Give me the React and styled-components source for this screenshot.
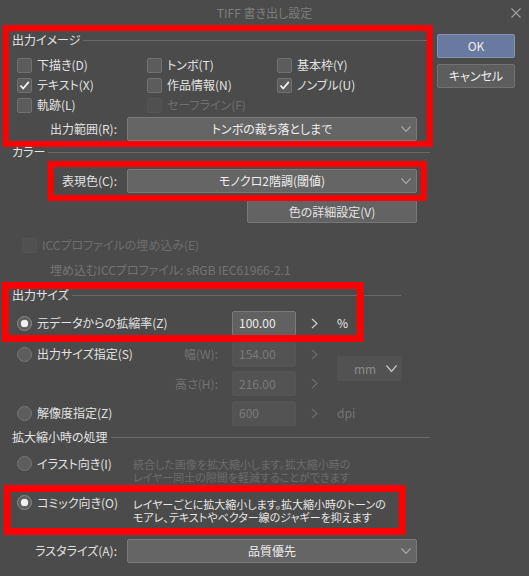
import React from "react";
import styled, { createGlobalStyle } from "styled-components";

const GlobalStyle = createGlobalStyle`
  body {
    margin: 0;
    background: #4b4b4b;
  }
`;

const Dialog = styled.div`
  position: relative;
  width: 529px;
  height: 576px;
  overflow: hidden;
  background: #4b4b4b;
  color: #e2e2e2;
  font-family: "Noto Sans CJK JP", "Noto Sans", sans-serif;
  font-size: 12px;
  line-height: 1;
  font-feature-settings: "palt";
`;

const TitleBar = styled.div`
  height: 25px;
  display: grid;
  grid-template-columns: 1fr auto 1fr;
  align-items: center;
  color: #7e7e7e;
`;

const CloseButton = styled.div`
  grid-column: 3;
  justify-self: end;
  padding-right: 8px;
  display: flex;
`;

const Body = styled.div`
  display: flex;
`;

const LeftColumn = styled.div`
  width: 432px;
  display: flex;
  flex-direction: column;
`;

const RightColumn = styled.div`
  margin-left: 5px;
  width: 78px;
  padding-top: 9px;
  display: flex;
  flex-direction: column;
  gap: 6px;
`;

const DialogButton = styled.div`
  height: 24px;
  box-sizing: border-box;
  display: flex;
  align-items: center;
  justify-content: center;
  border-radius: 2px;
  background: ${(p) => (p.primary ? "#6a79a0" : "#5d5d5d")};
  border: 1px solid ${(p) => (p.primary ? "#8592b3" : "#737373")};
  color: #eeeeee;
`;

const SectionHeader = styled.div`
  height: ${(p) => p.h}px;
  width: ${(p) => p.end}px;
  padding-left: 12px;
  box-sizing: border-box;
  display: flex;
  align-items: center;
  color: #e4e4e4;
`;

const HeaderLine = styled.div`
  flex: 1;
  height: 1px;
  margin-left: 3px;
  margin-top: 1px;
  background: #686868;
`;

const CheckGrid = styled.div`
  display: grid;
  grid-template-columns: 130px 130px 1fr;
  grid-auto-rows: 20px;
  padding-left: 17px;
`;

const CheckItem = styled.div`
  display: flex;
  align-items: center;
  gap: 5px;
  padding-left: ${(p) => p.indent || 0}px;
  color: ${(p) => (p.disabled ? "#6e6e6e" : "#e2e2e2")};
`;

const Box = styled.div`
  width: 15px;
  height: 15px;
  box-sizing: border-box;
  border-radius: 2px;
  display: flex;
  align-items: center;
  justify-content: center;
  background: ${(p) => (p.disabled ? "#505050" : "#5c5c5c")};
  border: 1px solid ${(p) => (p.disabled ? "#545454" : "#717171")};
`;

const Row = styled.div`
  height: ${(p) => p.h}px;
  display: flex;
  align-items: center;
  padding-left: ${(p) => p.indent || 0}px;
  margin-top: ${(p) => p.mt || 0}px;
  color: ${(p) => p.color || "#e2e2e2"};
`;

const FieldLabel = styled.div`
  width: 117px;
  text-align: right;
`;

const Select = styled.div`
  margin-left: 10px;
  width: 290px;
  height: 24px;
  box-sizing: border-box;
  display: grid;
  grid-template-columns: 20px 1fr 20px;
  align-items: center;
  background: #656565;
  border: 1px solid #7a7a7a;
  border-radius: 2px;
  color: #ededed;
`;

const SelectText = styled.div`
  grid-column: 2;
  text-align: center;
`;

const ChevronCell = styled.div`
  display: flex;
  justify-content: center;
`;

const WideButton = styled.div`
  margin-left: 247px;
  width: 170px;
  height: 23px;
  box-sizing: border-box;
  display: flex;
  align-items: center;
  justify-content: center;
  background: #636363;
  border: 1px solid #787878;
  border-radius: 2px;
`;

const SizeGrid = styled.div`
  display: grid;
  padding-left: 17px;
  grid-template-columns: 215px 64px 41px 65px;
  grid-template-rows: 32px 30px 29px 30px;
  align-items: center;
`;

const SizeCell = styled.div`
  display: flex;
  align-items: center;
  justify-content: ${(p) => (p.end ? "flex-end" : "space-between")};
  padding-right: 14px;
`;

const SubLabel = styled.div`
  color: #727272;
`;

const RadioOption = styled.div`
  display: flex;
  align-items: center;
  gap: 5px;
`;

const Radio = styled.div`
  width: 15px;
  height: 15px;
  box-sizing: border-box;
  border-radius: 50%;
  display: flex;
  align-items: center;
  justify-content: center;
  background: #5d5d5d;
  border: 1px solid ${(p) => (p.checked ? "#8a8a8a" : "#767676")};

  &::after {
    content: "";
    display: ${(p) => (p.checked ? "block" : "none")};
    width: 7px;
    height: 7px;
    border-radius: 50%;
    background: #f0f0f0;
    box-shadow: 0 0 1px #ffffff;
  }
`;

const NumInput = styled.div`
  height: 25px;
  box-sizing: border-box;
  display: flex;
  align-items: center;
  padding-left: 6px;
  border-radius: 2px;
  background: ${(p) => (p.disabled ? "#535353" : "#616161")};
  border: 1px solid ${(p) => (p.disabled ? "#555555" : "#7a7a7a")};
  color: ${(p) => (p.disabled ? "#7a7a7a" : "#ececec")};
`;

const ArrowCell = styled.div`
  padding-left: 15px;
  display: flex;
`;

const Unit = styled.div`
  color: ${(p) => (p.disabled ? "#747474" : "#e8e8e8")};
`;

const UnitSelect = styled.div`
  grid-column: 4;
  grid-row: 2 / span 2;
  height: 25px;
  box-sizing: border-box;
  display: flex;
  align-items: center;
  justify-content: space-between;
  padding: 0 5px 0 17px;
  border-radius: 2px;
  background: #525252;
  color: #8a8a8a;
`;

const ModeRow = styled.div`
  display: grid;
  grid-template-columns: 116px 1fr;
  align-items: start;
  padding-left: 17px;
  height: ${(p) => p.h}px;
  box-sizing: border-box;
  padding-top: ${(p) => p.pt}px;
`;

const ModeDesc = styled.div`
  margin-top: ${(p) => p.mt}px;
  font-family: "Liberation Sans", "Noto Sans CJK JP", sans-serif;
  font-size: 11px;
  line-height: 12.5px;
  color: ${(p) => (p.dim ? "#6c6c6c" : "#e6e6e6")};
`;

const RedBox = styled.div`
  position: absolute;
  left: ${(p) => p.x}px;
  top: ${(p) => p.y}px;
  width: ${(p) => p.w}px;
  height: ${(p) => p.h}px;
  box-sizing: border-box;
  border: ${(p) => p.b}px solid #ff0000;
  pointer-events: none;
`;

const Chevron = ({ color = "#a6a6a6", w = 10, h = 6 }) => (
  <svg width={w} height={h} viewBox={`0 0 ${w} ${h}`}>
    <polyline
      points={`0.5,0.5 ${w / 2},${h - 0.5} ${w - 0.5},0.5`}
      fill="none"
      stroke={color}
      strokeWidth="1.2"
    />
  </svg>
);

const RightArrow = ({ color }) => (
  <svg width="7" height="11" viewBox="0 0 7 11">
    <polyline points="1,1 6,5.5 1,10" fill="none" stroke={color} strokeWidth="1.2" />
  </svg>
);

const Check = () => (
  <svg width="13" height="13" viewBox="0 0 13 13">
    <polyline points="2.5,6.5 5.2,9.5 10.8,2.8" fill="none" stroke="#f4f4f4" strokeWidth="1.8" />
  </svg>
);

const CheckOption = ({ label, checked, disabled, indent }) => (
  <CheckItem disabled={disabled} indent={indent}>
    <Box disabled={disabled}>{checked && <Check />}</Box>
    <span>{label}</span>
  </CheckItem>
);

const DropDown = ({ children }) => (
  <Select>
    <SelectText>{children}</SelectText>
    <ChevronCell>
      <Chevron />
    </ChevronCell>
  </Select>
);

const RadioItem = ({ label, checked }) => (
  <RadioOption>
    <Radio checked={checked} />
    <span>{label}</span>
  </RadioOption>
);

const App = () => {
  return (
    <>
      <GlobalStyle />
      <Dialog>
        <TitleBar>
          <span style={{ gridColumn: 2 }}>TIFF 書き出し設定</span>
          <CloseButton>
            <svg width="10" height="10" viewBox="0 0 10 10">
              <path d="M0.5 0.5 L9.5 9.5 M9.5 0.5 L0.5 9.5" stroke="#a2a2a2" strokeWidth="1.1" />
            </svg>
          </CloseButton>
        </TitleBar>

        <Body>
          <LeftColumn>
            <SectionHeader h={30} end={430}>
              出力イメージ
              <HeaderLine />
            </SectionHeader>
            <CheckGrid>
              <CheckOption label="下描き(D)" />
              <CheckOption label="トンボ(T)" />
              <CheckOption label="基本枠(Y)" />
              <CheckOption label="テキスト(X)" checked />
              <CheckOption label="作品情報(N)" />
              <CheckOption label="ノンブル(U)" checked />
              <CheckOption label="軌跡(L)" />
              <CheckOption label="セーフライン(F)" disabled />
            </CheckGrid>
            <Row h={28}>
              <FieldLabel>出力範囲(R):</FieldLabel>
              <DropDown>トンボの裁ち落としまで</DropDown>
            </Row>

            <SectionHeader h={18} end={430}>
              カラー
              <HeaderLine />
            </SectionHeader>
            <Row h={39}>
              <FieldLabel>表現色(C):</FieldLabel>
              <DropDown>モノクロ2階調(閾値)</DropDown>
            </Row>
            <WideButton>色の詳細設定(V)</WideButton>

            <Row h={24} mt={10}>
              <CheckOption label="ICCプロファイルの埋め込み(E)" disabled indent={22} />
            </Row>
            <Row h={26} indent={50} color="#737373">
              埋め込むICCプロファイル: sRGB IEC61966-2.1
            </Row>

            <SectionHeader h={24} end={401}>
              出力サイズ
              <HeaderLine />
            </SectionHeader>
            <SizeGrid>
              <SizeCell>
                <RadioItem label="元データからの拡縮率(Z)" checked />
              </SizeCell>
              <NumInput>100.00</NumInput>
              <ArrowCell>
                <RightArrow color="#cfcfcf" />
              </ArrowCell>
              <Unit>%</Unit>

              <SizeCell>
                <RadioItem label="出力サイズ指定(S)" />
                <SubLabel>幅(W):</SubLabel>
              </SizeCell>
              <NumInput disabled>154.00</NumInput>
              <ArrowCell>
                <RightArrow color="#6c6c6c" />
              </ArrowCell>
              <UnitSelect>
                <span>mm</span>
                <Chevron color="#c9c9c9" w={11} h={7} />
              </UnitSelect>

              <SizeCell end>
                <SubLabel>高さ(H):</SubLabel>
              </SizeCell>
              <NumInput disabled>216.00</NumInput>
              <ArrowCell>
                <RightArrow color="#6c6c6c" />
              </ArrowCell>

              <SizeCell>
                <RadioItem label="解像度指定(Z)" />
              </SizeCell>
              <NumInput disabled>600</NumInput>
              <ArrowCell>
                <RightArrow color="#6c6c6c" />
              </ArrowCell>
              <Unit disabled>dpi</Unit>
            </SizeGrid>

            <SectionHeader h={18} end={430}>
              拡大縮小時の処理
              <HeaderLine />
            </SectionHeader>
            <ModeRow h={40} pt={10}>
              <RadioItem label="イラスト向き(I)" />
              <ModeDesc mt={3} dim>
                統合した画像を拡大縮小します。拡大縮小時の
                <br />
                レイヤー同士の隙間を軽減することができます
              </ModeDesc>
            </ModeRow>
            <ModeRow h={42} pt={9}>
              <RadioItem label="コミック向き(O)" checked />
              <ModeDesc mt={4}>
                レイヤーごとに拡大縮小します。拡大縮小時のトーンの
                <br />
                モアレ、テキストやベクター線のジャギーを抑えます
              </ModeDesc>
            </ModeRow>
            <Row h={45}>
              <FieldLabel>ラスタライズ(A):</FieldLabel>
              <DropDown>品質優先</DropDown>
            </Row>
          </LeftColumn>

          <RightColumn>
            <DialogButton primary>OK</DialogButton>
            <DialogButton>キャンセル</DialogButton>
          </RightColumn>
        </Body>

        <RedBox x={3} y={25} w={430} h={122} b={6} />
        <RedBox x={48} y={161} w={379} h={40} b={6} />
        <RedBox x={2} y={282} w={362} h={60} b={7} />
        <RedBox x={4} y={485} w={402} h={50} b={7} />
      </Dialog>
    </>
  );
};

export default App;
